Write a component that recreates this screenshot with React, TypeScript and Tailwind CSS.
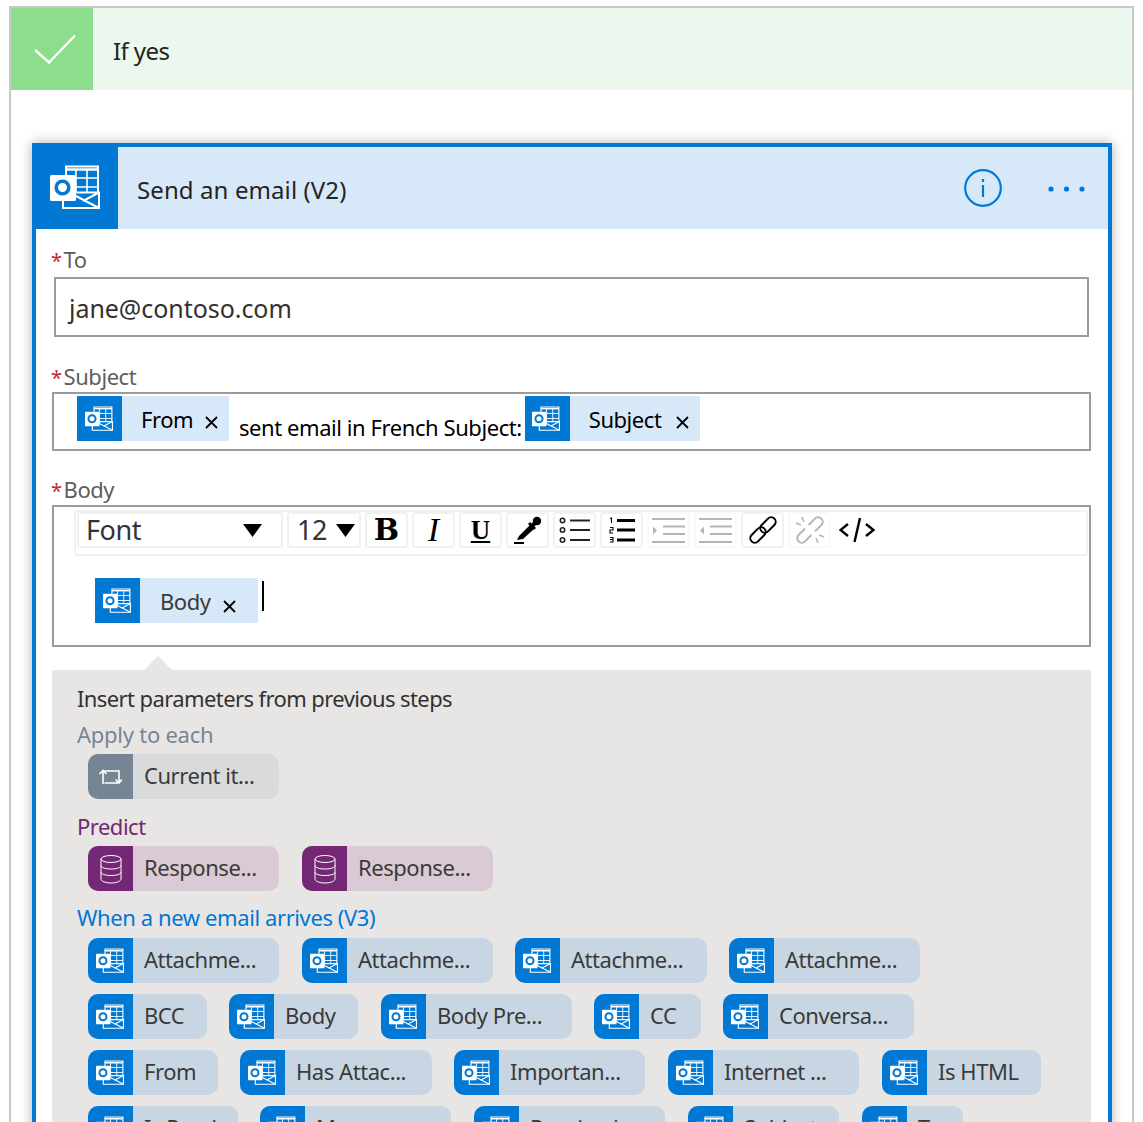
import React from 'react';

const OutlookIcon = ({ className, bg = '#0078d4' }: { className: string; bg?: string }) => (
  <svg className={className} viewBox="0 0 50 44" fill="none">
    <path d="M16 1.5H48V31H16Z" stroke="#fff" strokeWidth="2" />
    <path d="M16 4.5H48" stroke="#fff" strokeWidth="2.5" />
    <path d="M26 5V27M37 5V27M16 13H48M16 22H48" stroke="#fff" strokeWidth="1.6" />
    <path d="M13 27.5H49V43H13Z" fill={bg} stroke="#fff" strokeWidth="2" />
    <path d="M24 30L49 43M49 27.5L33 36" stroke="#fff" strokeWidth="2" />
    <rect x="0" y="10" width="26" height="26" rx="1.5" fill="#fff" />
    <circle cx="12.5" cy="22.5" r="6.3" stroke={bg} strokeWidth="3.6" />
  </svg>
);

const RepeatIcon = () => (
  <svg className="w-[24px] h-[20px] -ml-[2px]" viewBox="0 0 24 20" fill="none" stroke="#fff" strokeWidth="1.6">
    <path d="M5 17V4H21V15M1.5 7L5 3.5L8.500 7" />
    <path d="M20 16H6.500M17.500 12.500L21 16L24 12.500" />
  </svg>
);

const DbIcon = () => (
  <svg className="w-[22px] h-[30px]" viewBox="0 0 22 30" fill="none" stroke="#fff" strokeWidth="1">
    <ellipse cx="11" cy="5" rx="10" ry="3.500" />
    <path d="M1 5V25C1 27 5 29 11 29C17 29 21 27 21 25V5" />
    <path d="M1 11.500C1 13.500 5 15 11 15C17 15 21 13.500 21 11.500" />
    <path d="M1 18C1 20 5 21.500 11 21.500C17 21.500 21 20 21 18" />
  </svg>
);

type Tone = 'blue' | 'grey' | 'purple';

const toneIcon: Record<Tone, string> = {
  blue: 'bg-[#0078d4]',
  grey: 'bg-[#768594]',
  purple: 'bg-[#742774]',
};
const toneBody: Record<Tone, string> = {
  blue: 'bg-[#c8d6e4]',
  grey: 'bg-[#d8dadc]',
  purple: 'bg-[#d9cad6]',
};

const Param = ({ label, w, tone = 'blue' }: { label: string; w: string; tone?: Tone }) => (
  <div className={`flex h-[45px] shrink-0 rounded-[10px] overflow-hidden ${w} ${toneBody[tone]}`}>
    <div className={`w-[45px] shrink-0 flex items-center justify-center ${toneIcon[tone]}`}>
      {tone === 'blue' && <OutlookIcon className="w-[28px] h-[25px] -ml-[2px]" />}
      {tone === 'grey' && <RepeatIcon />}
      {tone === 'purple' && <DbIcon />}
    </div>
    <span className="pl-[11px] text-[22px] leading-[43px] text-[#3b3a39] tracking-[-0.45px] whitespace-nowrap">{label}</span>
  </div>
);

const Token = ({ label, w, x, closeX, light }: { label: string; w: string; x: string; closeX: string; light?: boolean }) => (
  <div className={`flex h-[45px] shrink-0 bg-[#d7e9f8] ${w}`}>
    <div className="w-[45px] shrink-0 bg-[#0078d4] flex items-center justify-center">
      <OutlookIcon className="w-[28px] h-[25px] -ml-[2px]" />
    </div>
    <span className={`text-[22px] leading-[47px] tracking-[-0.45px] whitespace-nowrap ${x} ${light ? 'text-[#3b3a39]' : 'text-black'}`}>{label}</span>
    <svg className={`ml-auto w-[13px] h-[13px] ${closeX}`} viewBox="0 0 13 13" stroke="#000" strokeWidth="1.800">
      <path d="M1 1L12 12M12 1L1 12" />
    </svg>
  </div>
);

const FieldLabel = ({ text }: { text: string }) => (
  <div className="h-[30px] pl-[15px] text-[22px] leading-[28px] text-[#605e5c] tracking-[-0.45px]">
    <span className="text-[20px] text-[#c4262e] mr-[2px]">*</span>
    {text}
  </div>
);

const ToolBtn = ({ children, plain, faint }: { children: React.ReactNode; plain?: boolean; faint?: boolean }) => (
  <div className={`w-[43px] h-[36px] flex items-center justify-center rounded-[3px] ${plain ? '' : faint ? 'border-2 border-[#f9f9f9]' : 'border-2 border-[#f1f1f1]'}`}>
    {children}
  </div>
);

const Caret = () => (
  <svg className="w-[19px] h-[13px]" viewBox="0 0 19 13" fill="#000">
    <path d="M0 0H19L9.500 13Z" />
  </svg>
);

const Toolbar = () => (
  <div className="ml-[20px] mt-[3px] w-[1014px] h-[46px] border-2 border-[#f1f1f1] rounded-[3px] flex gap-[4px] pl-[1px]">
    <div className="w-[206px] h-[36px] border-2 border-[#f1f1f1] rounded-[3px] flex items-center pl-[7px] pr-[19px] justify-between">
      <span className="text-[27px] text-[#333] leading-[36px] tracking-[-0.4px]">Font</span>
      <Caret />
    </div>
    <div className="w-[74px] h-[36px] border-2 border-[#f1f1f1] rounded-[3px] flex items-center pl-[8px] pr-[4px] justify-between">
      <span className="text-[27px] text-[#333] leading-[36px] tracking-[-0.4px]">12</span>
      <Caret />
    </div>
    <ToolBtn><span className="font-['DejaVu_Serif',serif] font-bold text-[30px] leading-[30px] text-black">B</span></ToolBtn>
    <ToolBtn><span className="font-['Liberation_Serif',serif] italic text-[34px] leading-[30px] text-black">I</span></ToolBtn>
    <ToolBtn><span className="font-['Liberation_Serif',serif] font-bold text-[27px] leading-[28px] text-black underline">U</span></ToolBtn>
    <ToolBtn>
      <svg className="w-[28px] h-[28px]" viewBox="0 0 28 28">
        <path d="M3 24L5 20L16 9L20 13L9 23Z" fill="#000" />
        <path d="M14 8L16 6L22 12L20 14Z" fill="#000" />
        <circle cx="23" cy="5" r="4.200" fill="#000" />
        <path d="M18 7L21 10" stroke="#000" strokeWidth="4" />
        <path d="M0 27H10" stroke="#000" strokeWidth="2" />
      </svg>
    </ToolBtn>
    <ToolBtn>
      <svg className="w-[32px] h-[26px]" viewBox="0 0 32 26" fill="none" stroke="#222">
        <circle cx="3.500" cy="3.500" r="2.200" strokeWidth="1.600" />
        <circle cx="3.500" cy="13" r="2.200" strokeWidth="1.600" />
        <circle cx="3.500" cy="23" r="2.200" strokeWidth="1.600" />
        <path d="M11 3.500H31M11 13H31M11 23H31" strokeWidth="1.800" />
      </svg>
    </ToolBtn>
    <ToolBtn>
      <svg className="w-[28px] h-[26px]" viewBox="0 0 28 26" fill="none" stroke="#000">
        <path d="M2 1.500L3.500 1V6M2 10.500H5V13H2V16H5M2 20.500H5V25H2M2 22.500H5" strokeWidth="1.100" />
        <path d="M9 3.500H27M9 13H27M9 23H27" strokeWidth="2.800" />
      </svg>
    </ToolBtn>
    <ToolBtn faint>
      <svg className="w-[33px] h-[27px]" viewBox="0 0 33 27" fill="none" stroke="#b5b5b5" strokeWidth="2">
        <path d="M0 2H33M11 9.500H33M11 17H33M0 25H33" />
        <path d="M1 9.500L5 13.500L1 17.500Z" fill="#b5b5b5" stroke="none" />
      </svg>
    </ToolBtn>
    <ToolBtn faint>
      <svg className="w-[33px] h-[27px]" viewBox="0 0 33 27" fill="none" stroke="#b5b5b5" strokeWidth="2">
        <path d="M0 2H33M11 9.500H33M11 17H33M0 25H33" />
        <path d="M5 9.500L1 13.500L5 17.500Z" fill="#b5b5b5" stroke="none" />
      </svg>
    </ToolBtn>
    <ToolBtn>
      <svg className="w-[30px] h-[30px]" viewBox="0 0 30 30" fill="none" stroke="#000" strokeWidth="2">
        <rect x="15.500" y="1" width="9" height="18" rx="4.500" transform="rotate(45 20 10)" />
        <rect x="5.500" y="11" width="9" height="18" rx="4.500" transform="rotate(45 10 20)" />
      </svg>
    </ToolBtn>
    <ToolBtn faint>
      <svg className="w-[30px] h-[30px]" viewBox="0 0 30 30" fill="none" stroke="#b5b5b5" strokeWidth="2">
        <path d="M20 16.400L26.400 10A4.500 4.500 0 0 0 20 3.600L13.600 10" />
        <path d="M16.400 20L10 26.400A4.500 4.500 0 0 1 3.600 20L10 13.600" />
        <path d="M9 7L7 2M6 10L1 8M21 23L23 28M24 20L29 22" strokeWidth="1.500" />
      </svg>
    </ToolBtn>
    <ToolBtn plain>
      <svg className="w-[36px] h-[26px]" viewBox="0 0 36 26" fill="none" stroke="#000" strokeWidth="2.400">
        <path d="M9 7L1.500 13L9 19M27 7L34.500 13L27 19" />
        <path d="M21 1L15.500 25" />
      </svg>
    </ToolBtn>
  </div>
);

const rows = [
  [
    { label: 'Attachme...', w: 'w-[191px]', gap: 'mr-[23px]' },
    { label: 'Attachme...', w: 'w-[191px]', gap: 'mr-[22px]' },
    { label: 'Attachme...', w: 'w-[192px]', gap: 'mr-[22px]' },
    { label: 'Attachme...', w: 'w-[191px]', gap: '' },
  ],
  [
    { label: 'BCC', w: 'w-[119px]', gap: 'mr-[22px]' },
    { label: 'Body', w: 'w-[129px]', gap: 'mr-[23px]' },
    { label: 'Body Pre...', w: 'w-[191px]', gap: 'mr-[22px]' },
    { label: 'CC', w: 'w-[107px]', gap: 'mr-[22px]' },
    { label: 'Conversa...', w: 'w-[191px]', gap: '' },
  ],
  [
    { label: 'From', w: 'w-[130px]', gap: 'mr-[22px]' },
    { label: 'Has Attac...', w: 'w-[192px]', gap: 'mr-[22px]' },
    { label: 'Importan...', w: 'w-[191px]', gap: 'mr-[23px]' },
    { label: 'Internet ...', w: 'w-[191px]', gap: 'mr-[23px]' },
    { label: 'Is HTML', w: 'w-[159px]', gap: '' },
  ],
  [
    { label: 'Is Read', w: 'w-[150px]', gap: 'mr-[22px]' },
    { label: 'Message...', w: 'w-[191px]', gap: 'mr-[23px]' },
    { label: 'Received...', w: 'w-[191px]', gap: 'mr-[23px]' },
    { label: 'Subject', w: 'w-[151px]', gap: 'mr-[23px]' },
    { label: 'To', w: 'w-[101px]', gap: '' },
  ],
];

export default function App() {
  return (
    <div className="h-[1122px] overflow-hidden bg-white font-['Noto_Sans','Open_Sans',sans-serif]">
      <div className="ml-[9px] mt-[6px] w-[1125px] h-[1200px] border-x-2 border-t-2 border-[#c8c8c8]">
        {/* If yes */}
        <div className="flex h-[82px] bg-[#ecf7ee]">
          <div className="w-[82px] bg-[#8cdd8c] flex items-center justify-center">
            <svg className="ml-[5px] w-[42px] h-[30px]" viewBox="0 0 42 30" fill="none" stroke="#fff" strokeWidth="2.400">
              <path d="M1 16L15 28.500L41 1.500" />
            </svg>
          </div>
          <span className="ml-[20px] text-[24px] leading-[86px] text-[#252423] tracking-[-0.6px]">If yes</span>
        </div>

        {/* action card */}
        <div className="ml-[21px] mt-[53px] w-[1080px] border-4 border-[#0078d4] shadow-[0_0_12px_rgba(0,0,0,0.3)]">
          <div className="flex h-[82px] bg-[#d7e9f8] items-center">
            <div className="w-[82px] h-full bg-[#0078d4] flex items-center justify-center">
              <OutlookIcon className="w-[50px] h-[44px] -mt-[3px] -ml-[4px]" />
            </div>
            <span className="ml-[19px] pt-[4px] text-[24px] text-[#252423] tracking-[0.1px]">Send an email (V2)</span>
            <svg className="ml-auto w-[38px] h-[38px]" viewBox="0 0 38 38" fill="none" stroke="#0078d4" strokeWidth="2.200">
              <circle cx="19" cy="19" r="17.800" />
              <path d="M19 16V28M19 10V13" />
            </svg>
            <svg className="ml-[46px] mr-[22px] mt-[2px] w-[38px] h-[6px]" viewBox="0 0 38 6" fill="#0078d4">
              <circle cx="3" cy="3" r="2.600" />
              <circle cx="18.500" cy="3" r="2.600" />
              <circle cx="34" cy="3" r="2.600" />
            </svg>
          </div>

          <div className="bg-white pt-[16px] h-[1000px]">
            <FieldLabel text="To" />
            <div className="ml-[18px] mt-[2px] w-[1035px] h-[60px] border-2 border-[#9b9b9b] pl-[13px] text-[25px] leading-[58px] text-[#323130] tracking-[-0.05px]">
              jane@contoso.com
            </div>

            <div className="mt-[25px]"><FieldLabel text="Subject" /></div>
            <div className="ml-[16px] w-[1039px] h-[59px] border-2 border-[#9b9b9b] flex pl-[23px] pt-[2px]">
              <Token label="From" w="w-[152px]" x="ml-[19px]" closeX="mr-[11px] mt-[20px]" />
              <span className="ml-[10px] mr-[3px] text-[22px] leading-[62px] text-black tracking-[-0.43px] whitespace-nowrap">sent email in French Subject:</span>
              <Token label="Subject" w="w-[175px]" x="ml-[19px]" closeX="mr-[11px] mt-[20px]" />
            </div>

            <div className="mt-[24px]"><FieldLabel text="Body" /></div>
            <div className="ml-[16px] w-[1039px] h-[142px] border-2 border-[#9b9b9b]">
              <Toolbar />
              <div className="ml-[41px] mt-[22px] flex">
                <Token label="Body" w="w-[163px]" x="ml-[20px]" closeX="mr-[22px] mt-[22px]" light />
                <div className="ml-[4px] mt-[3px] w-[2px] h-[30px] bg-black" />
              </div>
            </div>

            {/* dynamic content panel */}
            <div className="relative ml-[16px] mt-[23px] w-[1039px] bg-[#e8e6e5] pt-[13px] pl-[25px] pb-[40px]">
              <svg className="absolute left-[92px] -top-[14px] w-[28px] h-[14px]" viewBox="0 0 28 14" fill="#e8e6e5">
                <path d="M0 14L14 0L28 14Z" />
              </svg>
              <div className="h-[30px] text-[22px] leading-[30px] text-[#323130] tracking-[-0.6px]">Insert parameters from previous steps</div>

              <div className="mt-[6px] mb-[5px] h-[30px] text-[22px] leading-[30px] text-[#768594] tracking-[-0.25px]">Apply to each</div>
              <div className="ml-[11px] flex gap-[23px]">
                <Param label="Current it..." w="w-[191px]" tone="grey" />
              </div>

              <div className="mt-[12px] mb-[5px] h-[30px] text-[22px] leading-[30px] text-[#742774] tracking-[-0.5px]">Predict</div>
              <div className="ml-[11px] flex gap-[23px]">
                <Param label="Response..." w="w-[191px]" tone="purple" />
                <Param label="Response..." w="w-[191px]" tone="purple" />
              </div>

              <div className="mt-[11px] mb-[6px] h-[30px] text-[22px] leading-[30px] text-[#0078d4] tracking-[-0.4px]">When a new email arrives (V3)</div>
              <div className="ml-[11px] flex flex-col gap-[11px]">
                {rows.map((row, i) => (
                  <div key={i} className="flex">
                    {row.map((p, j) => (
                      <div key={j} className={p.gap}>
                        <Param label={p.label} w={p.w} />
                      </div>
                    ))}
                  </div>
                ))}
              </div>
            </div>
          </div>
        </div>
      </div>
    </div>
  );
}
